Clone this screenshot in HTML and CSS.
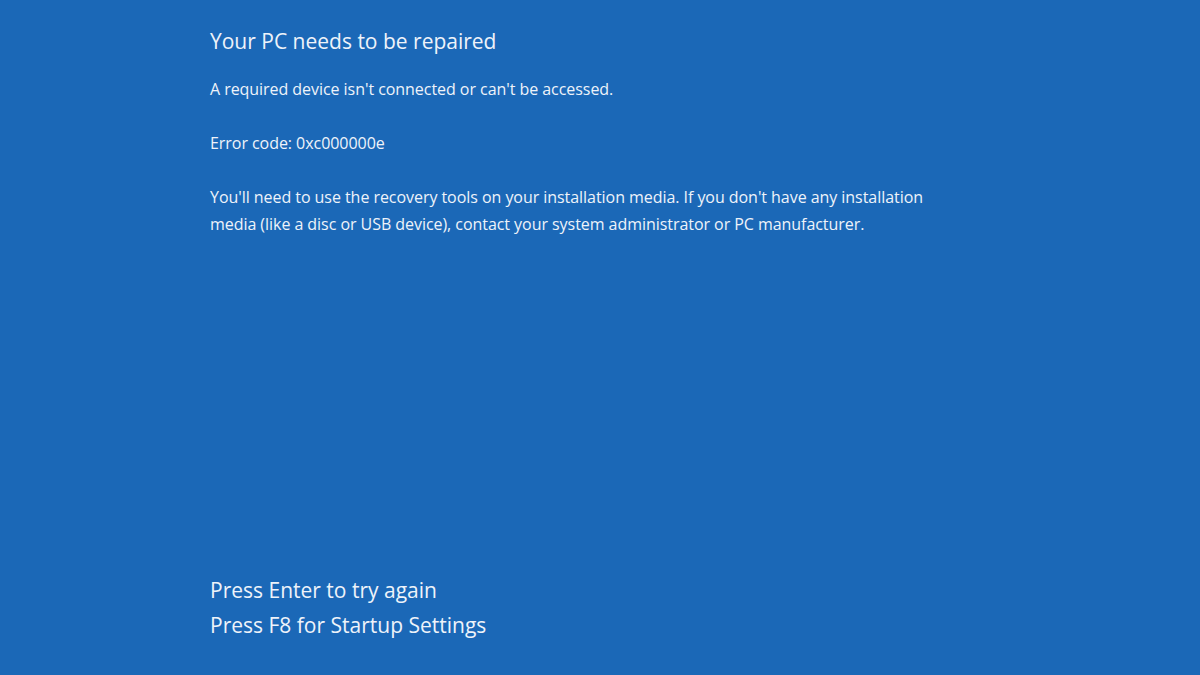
FILE: index.html
```html
<!DOCTYPE html>
<html lang="en">
<head>
<meta charset="utf-8">
<title>Recovery</title>
<link rel="stylesheet" href="styles.css">
</head>
<body>
<div class="screen">
  <div class="main">
    <h1 class="heading">Recovery</h1>
    <h2 class="title">Your PC needs to be repaired</h2>
    <p class="msg">A required device isn't connected or can't be accessed.</p>
    <p class="msg">Error code: 0xc000000e</p>
    <p class="msg para">You'll need to use the recovery tools on your installation media. If you don't have any installation<br>media (like a disc or USB device), contact your system administrator or PC manufacturer.</p>
  </div>
  <div class="footer">
    <p class="key">Press Enter to try again</p>
    <p class="key">Press F8 for Startup Settings</p>
  </div>
</div>
</body>
</html>
```

FILE: styles.css
```css
html, body {
  margin: 0;
  padding: 0;
  height: 100%;
  overflow: hidden;
}
body {
  background: #1b68b7;
  color: #eef3fa;
  font-family: "Open Sans", "Noto Sans", sans-serif;
}
.screen {
  height: 675px;
  box-sizing: border-box;
  padding-left: 210px;
  display: flex;
  flex-direction: column;
}
.main {
  display: flex;
  flex-direction: column;
}
.heading {
  margin: -48px 0 0 0;
  font-size: 38px;
  font-weight: 400;
  line-height: 48px;
  height: 48px;
}
.title {
  margin: 27px 0 0 0;
  font-size: 21px;
  font-weight: 400;
  line-height: 28px;
}
.msg {
  margin: 21px 0 0 0;
  font-size: 16px;
  letter-spacing: -0.05px;
  line-height: 27px;
}
.msg + .msg {
  margin-top: 27px;
}
.footer {
  margin-top: auto;
  padding-bottom: 32px;
}
.key {
  margin: 0;
  font-size: 21px;
  line-height: 35px;
}
```
